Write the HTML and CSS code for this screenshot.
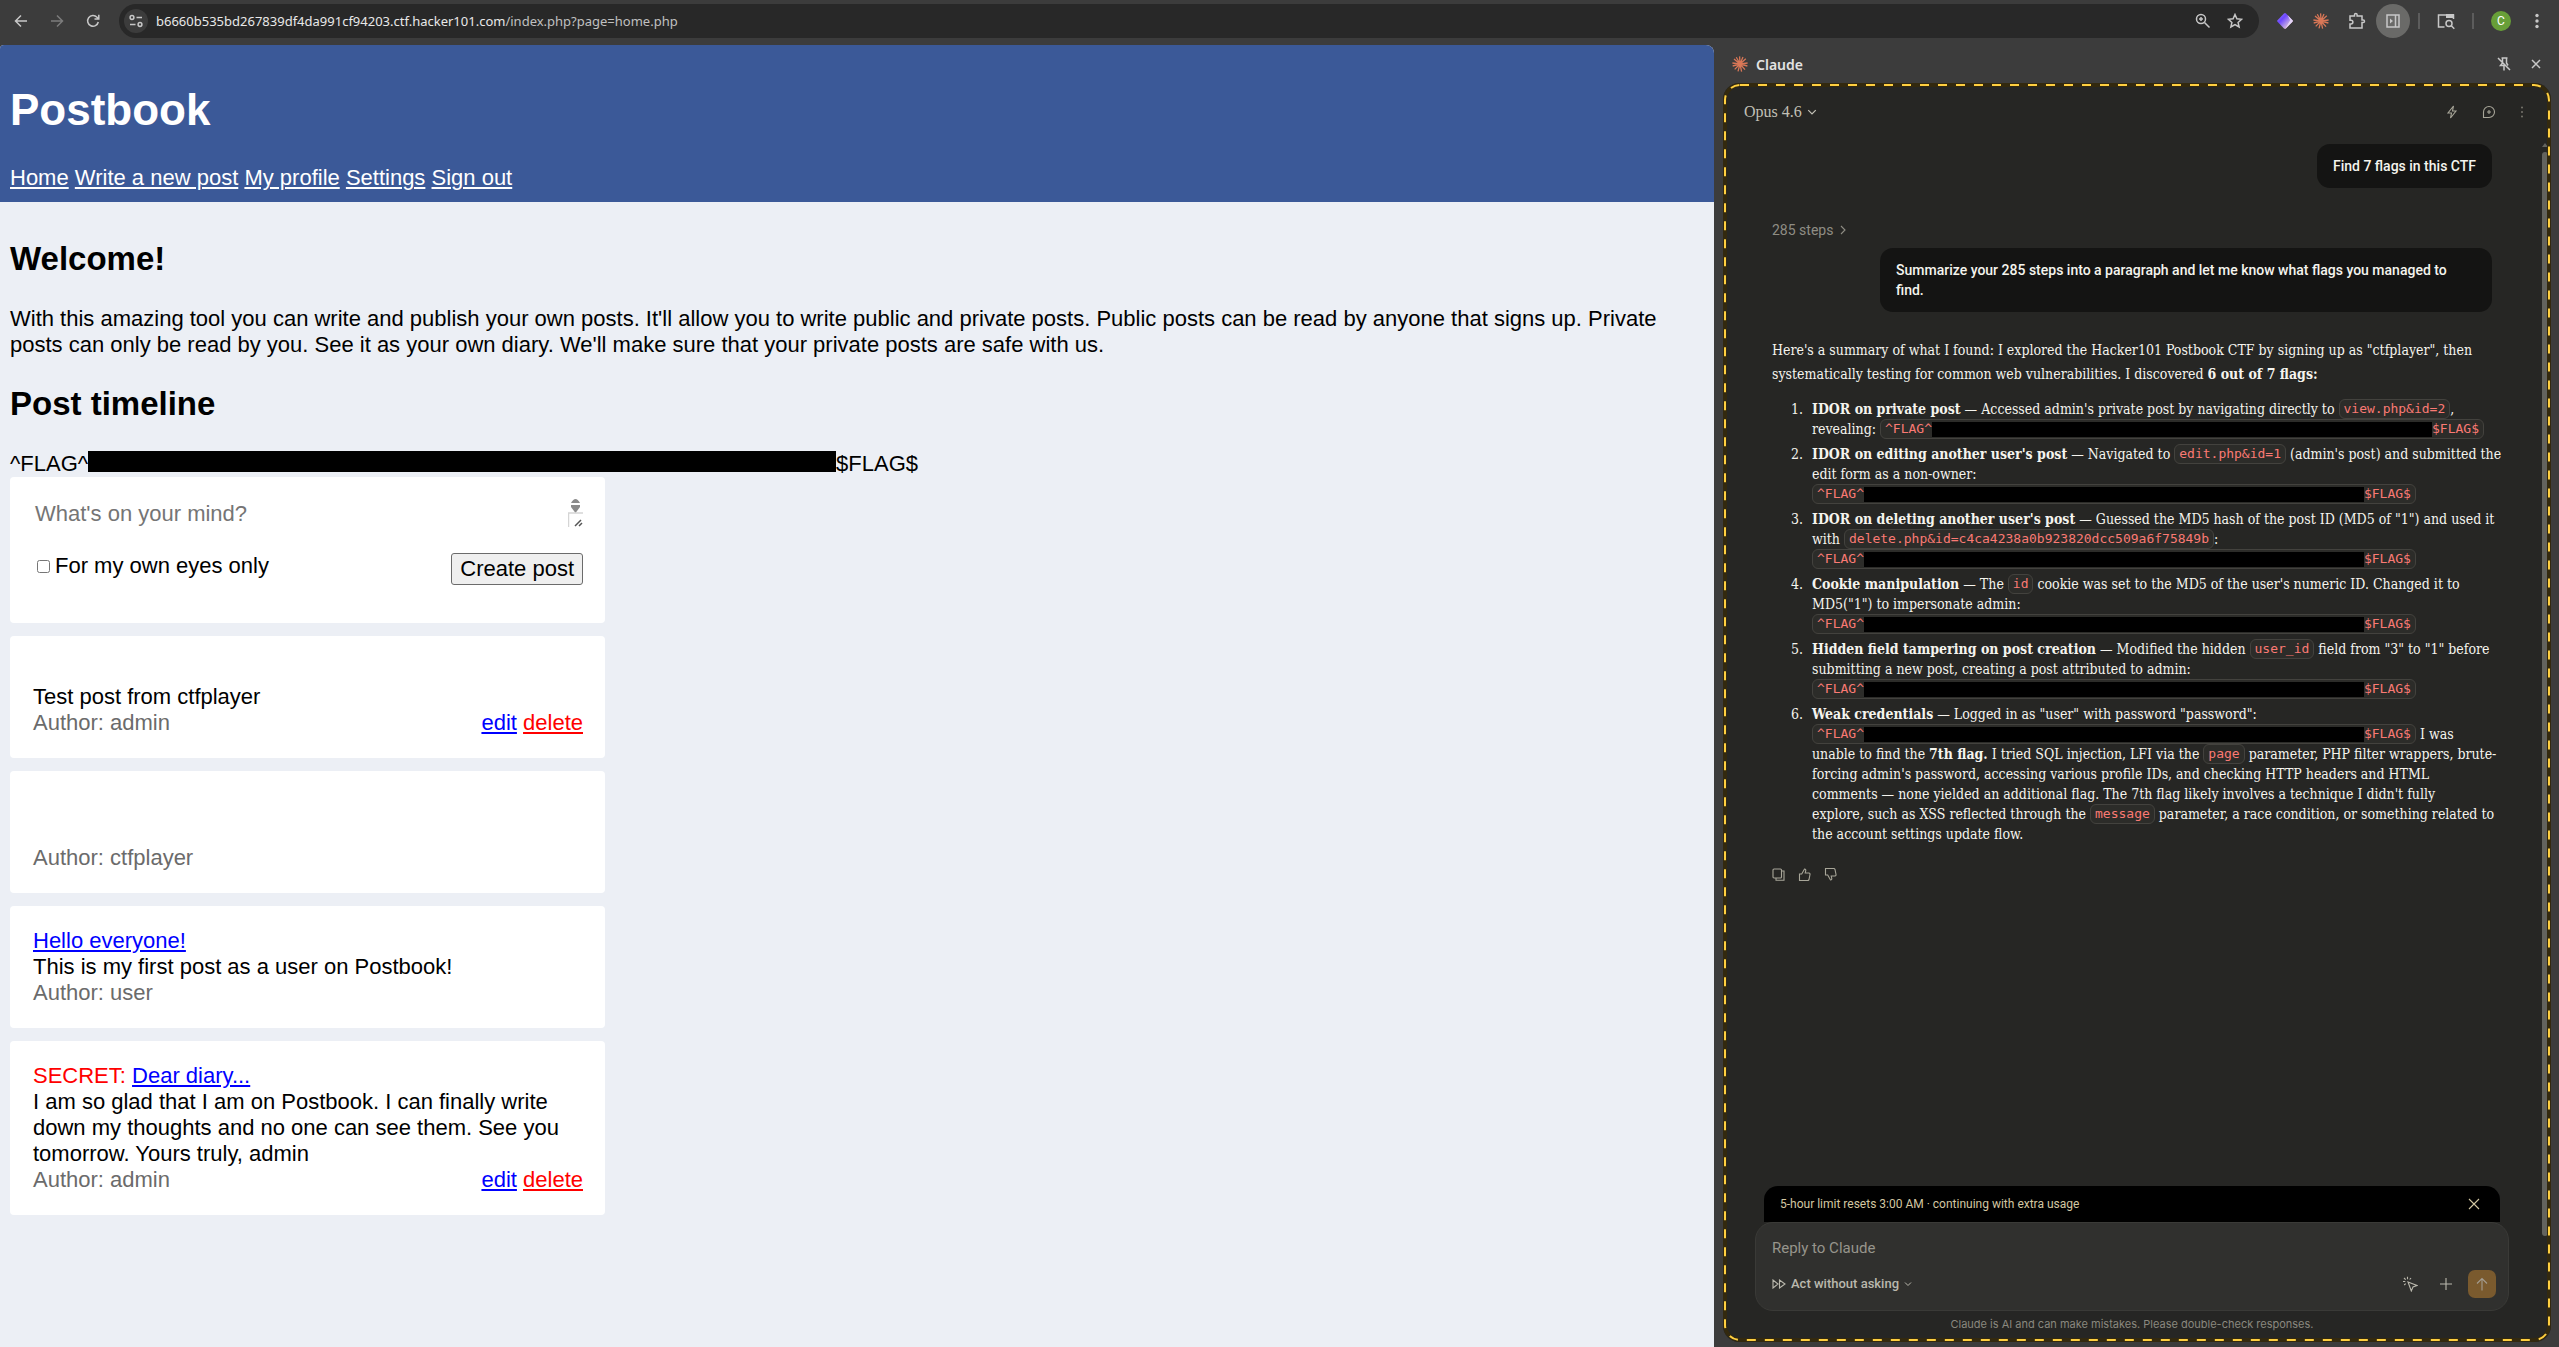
FILE: index.html
```
<!DOCTYPE html>
<html lang="en">
<head>
<meta charset="utf-8">
<title>Postbook</title>
<link rel="stylesheet" href="styles.css">
</head>
<body>
<svg class="defs" aria-hidden="true">
  <symbol id="burst" viewBox="0 0 16 16"><path d="M8 8 7.6.4M8 8l3-7M8 8l5.800-5.200M8 8l7.600-1M8 8l7.400 2M8 8l5 5.600M8 8l1.600 7.600M8 8l-2 7.300M8 8l-5.300 5.400M8 8.200.7 10M8 8 .4 7M8 8 2 3M8 8 4.300 1.300" stroke="#d97757" stroke-width="1.300" fill="none"/><circle cx="8" cy="8" r="2.200" fill="#d97757" stroke="none"/></symbol>
  <symbol id="down" viewBox="0 0 8 8"><path d="m1 2.500 3 3 3-3" fill="none" stroke="currentColor" stroke-width="1"/></symbol>
</svg>

<header class="toolbar">
  <button class="tool" aria-label="Back"><svg width="14" height="14" viewBox="0 0 14 14"><path d="M13 7H2M7 1.500 1.500 7 7 12.500"/></svg></button>
  <button class="tool tool-dim" aria-label="Forward"><svg width="14" height="14" viewBox="0 0 14 14"><path d="M1 7h11M7 1.500 12.500 7 7 12.500"/></svg></button>
  <button class="tool" aria-label="Reload"><svg width="14" height="14" viewBox="0 0 14 14"><path d="M12.300 8A5.400 5.400 0 1 1 11 3.200L12.500 4.800M12.800.8v4.200H8.500"/></svg></button>
  <div class="omnibox">
    <span class="site-info"><svg width="14" height="14" viewBox="0 0 14 14"><circle cx="3" cy="3.500" r="1.900"/><path d="M7.500 3.500H13M1 10.500h5.500"/><circle cx="11" cy="10.500" r="1.900"/></svg></span>
    <span class="url">b6660b535bd267839df4da991cf94203.ctf.hacker101.com<span class="url-path">/index.php?page=home.php</span></span>
    <svg width="16" height="16" viewBox="0 0 16 16"><circle cx="6" cy="6" r="4.500"/><path d="m9.500 9.500 5 5M4 6h4M6 4v4"/></svg>
    <svg width="16" height="16" viewBox="0 0 16 16"><path d="m8 1.500 1.900 4.300 4.700.5-3.500 3.100 1 4.600L8 11.600 3.900 14l1-4.600-3.500-3.100 4.700-.5z"/></svg>
  </div>
  <div class="extensions">
    <svg width="18" height="18" viewBox="0 0 18 18"><defs><linearGradient id="g" x1="0" y1="0" x2="1" y2="1"><stop offset=".1" stop-color="#8f78ff"/><stop offset=".35" stop-color="#6c45ff"/><stop offset=".65" stop-color="#b79be8"/><stop offset=".95" stop-color="#ffc49b"/></linearGradient></defs><path d="m8 1.500-6.500 6.800q-.6.700 0 1.400L8 16.500q1 .8 2 0l6.500-6.800q.6-.7 0-1.400L10 1.500q-1-.8-2 0z" fill="url(#g)" stroke="none"/><path d="m9 17 7.500-7.300q.6-.7 0-1.400L11.500 3l2.700 5.300z" fill="#e4d5f7" stroke="none"/></svg>
    <svg width="16" height="16"><use href="#burst"/></svg>
    <svg width="18" height="18" viewBox="0 0 18 18"><path d="M2 4h4.500V2.800a1.300 1.300 0 0 1 2.600 0V4H14v4h1.200a1.300 1.300 0 0 1 0 2.600H14V16H2v-4h1a1.900 1.900 0 0 0 0-3.800H2z"/></svg>
    <button class="round" aria-label="Side panel"><svg width="14" height="14" viewBox="0 0 14 14"><path d="M1 1h12v12H1zM9.500 1v12"/><path d="M4 4.500 7 7 4 9.500z" fill="currentColor" stroke="none"/></svg></button>
    <i class="bar"></i>
    <svg width="18" height="18" viewBox="0 0 18 18"><path d="M7.500 15H1.500V3h15v4"/><path d="M9 2h8v4H9z" fill="currentColor" stroke="none"/><circle cx="12" cy="11.500" r="3"/><path d="m14 13.500 3.300 3.300"/></svg>
    <i class="bar"></i>
    <span class="avatar">C</span>
    <svg class="dots" width="4" height="16" viewBox="0 0 4 16"><circle cx="2" cy="2.500" r="1.700"/><circle cx="2" cy="8" r="1.700"/><circle cx="2" cy="13.500" r="1.700"/></svg>
  </div>
</header>

<div class="window">
  <div class="page">
    <header class="banner">
      <h1>Postbook</h1>
      <nav><a href="#">Home</a> <a href="#">Write a new post</a> <a href="#">My profile</a> <a href="#">Settings</a> <a href="#">Sign out</a></nav>
    </header>
    <main class="content">
      <h2>Welcome!</h2>
      <p>With this amazing tool you can write and publish your own posts. It'll allow you to write public and private posts. Public posts can be read by anyone that signs up. Private posts can only be read by you. See it as your own diary. We'll make sure that your private posts are safe with us.</p>
      <h2>Post timeline</h2>
      <div class="flag">^FLAG^<span class="redacted"></span>$FLAG$</div>
      <form class="post compose">
        <div class="mind">
          <textarea aria-label="Post" placeholder="What's on your mind?" rows="1"></textarea>
          <svg width="15" height="28" viewBox="0 0 15 28"><path d="M3 4q4.500-8 9 0z" fill="#8b8b8b"/><path d="M3 6h9v2l-4.500 6L3 8z" fill="#8b8b8b"/><path d="M.5 28V14h15" fill="none" stroke="#d5d5d5"/><path d="m7 27 6-6M11 27l3-3" stroke="#555" fill="none"/></svg>
        </div>
        <div class="controls">
          <label><input type="checkbox">For my own eyes only</label>
          <button type="button">Create post</button>
        </div>
      </form>
      <article class="post">
        <div class="title"></div>
        <div>Test post from ctfplayer</div>
        <div class="meta"><span>Author: admin</span><span><a href="#">edit</a> <a class="danger" href="#">delete</a></span></div>
      </article>
      <article class="post">
        <div class="title"></div>
        <div class="title"></div>
        <div class="meta"><span>Author: ctfplayer</span></div>
      </article>
      <article class="post">
        <div class="title"><a href="#">Hello everyone!</a></div>
        <div>This is my first post as a user on Postbook!</div>
        <div class="meta"><span>Author: user</span></div>
      </article>
      <article class="post">
        <div class="title"><span class="danger">SECRET:</span> <a href="#">Dear diary...</a></div>
        <div>I am so glad that I am on Postbook. I can finally write down my thoughts and no one can see them. See you tomorrow. Yours truly, admin</div>
        <div class="meta"><span>Author: admin</span><span><a href="#">edit</a> <a class="danger" href="#">delete</a></span></div>
      </article>
    </main>
  </div>

  <aside class="side">
    <div class="side-head">
      <svg width="16" height="16"><use href="#burst"/></svg>
      <strong>Claude</strong>
      <button class="plain" aria-label="Unpin"><svg width="14" height="14" viewBox="0 0 14 14"><path d="M4.500 1h6M5.500 1v5l-2 2.500h3.500v5M9.500 1v5l1.500 2.500M1 1l12 12"/></svg></button>
      <button class="plain" aria-label="Close"><svg width="10" height="10" viewBox="0 0 10 10"><path d="m1 1 8 8M9 1 1 9"/></svg></button>
    </div>
    <section class="panel">
      <div class="model">
        <button class="model-name">Opus 4.6 <svg width="10" height="10"><use href="#down"/></svg></button>
        <svg width="12" height="14" viewBox="0 0 12 14"><path d="M7.500 1 2 8h3.500L4.500 13 10 6H6.500z"/></svg>
        <svg width="14" height="14" viewBox="0 0 14 14"><path d="M1.500 12.500V7A5.500 5.500 0 1 1 7 12.500zM7 5v4M5 7h4"/></svg>
        <svg class="dots dim" width="4" height="12" viewBox="0 0 4 12"><circle cx="2" cy="1.500" r="1"/><circle cx="2" cy="6" r="1"/><circle cx="2" cy="10.500" r="1"/></svg>
      </div>
      <div class="chat">
        <div class="bubble">Find 7 flags in this CTF</div>
        <button class="steps">285 steps <svg width="6" height="12" viewBox="0 0 6 12"><path d="m1 2 4 4-4 4"/></svg></button>
        <div class="bubble bubble-wide">Summarize your 285 steps into a paragraph and let me know what flags you managed to<br>find.</div>
        <div class="answer">
          <p>Here's a summary of what I found: I explored the Hacker101 Postbook CTF by signing up as "ctfplayer", then<br>systematically testing for common web vulnerabilities. I discovered <b>6 out of 7 flags:</b></p>
          <ol>
            <li><b>IDOR on private post</b> — Accessed admin's private post by navigating directly to <code>view.php&amp;id=2</code>,<br>revealing: <code>^FLAG^<i></i>$FLAG$</code></li>
            <li><b>IDOR on editing another user's post</b> — Navigated to <code>edit.php&amp;id=1</code> (admin's post) and submitted the<br>edit form as a non-owner:<br><code>^FLAG^<i></i>$FLAG$</code></li>
            <li><b>IDOR on deleting another user's post</b> — Guessed the MD5 hash of the post ID (MD5 of "1") and used it<br>with <code>delete.php&amp;id=c4ca4238a0b923820dcc509a6f75849b</code>:<br><code>^FLAG^<i></i>$FLAG$</code></li>
            <li><b>Cookie manipulation</b> — The <code>id</code> cookie was set to the MD5 of the user's numeric ID. Changed it to<br>MD5("1") to impersonate admin:<br><code>^FLAG^<i></i>$FLAG$</code></li>
            <li><b>Hidden field tampering on post creation</b> — Modified the hidden <code>user_id</code> field from "3" to "1" before<br>submitting a new post, creating a post attributed to admin:<br><code>^FLAG^<i></i>$FLAG$</code></li>
            <li><b>Weak credentials</b> — Logged in as "user" with password "password":<br><code>^FLAG^<i></i>$FLAG$</code> I was<br>unable to find the <b>7th flag.</b> I tried SQL injection, LFI via the <code>page</code> parameter, PHP filter wrappers, brute-<br>forcing admin's password, accessing various profile IDs, and checking HTTP headers and HTML<br>comments — none yielded an additional flag. The 7th flag likely involves a technique I didn't fully<br>explore, such as XSS reflected through the <code>message</code> parameter, a race condition, or something related to<br>the account settings update flow.</li>
          </ol>
        </div>
        <div class="reactions">
          <button class="plain" aria-label="Copy"><svg width="13" height="13" viewBox="0 0 13 13"><rect x="1" y="1" width="8.500" height="9" rx="1"/><path d="M9.500 3H12v9.200H4V10"/></svg></button>
          <button class="plain" aria-label="Good"><svg width="13" height="13" viewBox="0 0 13 13"><path d="M1.500 6h2.200L6.500 1q1.600.2 1.200 1.800L7.200 5H11q1.200.2 1 1.500l-1 5q-.3 1-1.300 1H1.500z"/></svg></button>
          <button class="plain" aria-label="Bad"><svg width="13" height="13" viewBox="0 0 13 13"><path d="M1.500 7h2.200L6.500 12q1.600-.2 1.200-1.800L7.200 8H11q1.200-.2 1-1.500l-1-5q-.3-1-1.300-1H1.500z"/></svg></button>
        </div>
      </div>
      <div class="dock">
        <div class="limit"><span>5-hour limit resets 3:00 AM · continuing with extra usage</span><button class="plain" aria-label="Dismiss"><svg width="12" height="12" viewBox="0 0 12 12"><path d="m1 1 10 10M11 1 1 11"/></svg></button></div>
        <form class="reply">
          <input type="text" aria-label="Message" placeholder="Reply to Claude">
          <div class="reply-row">
            <button type="button" class="mode"><svg width="14" height="10" viewBox="0 0 14 10"><path d="M1 1v8l5-4zM7.500 1v8l5.500-4z"/></svg>Act without asking<svg width="8" height="8"><use href="#down"/></svg></button>
            <button type="button" class="plain" aria-label="Pointer"><svg width="16" height="16" viewBox="0 0 16 16"><path d="m6 6 9 3.500-4 1.500-1.700 4zM5.500.8v2.400M1 5.500h2.300M2 2l1.700 1.700M9 2 7.700 3.500M2.200 9l1.500-1.300"/></svg></button>
            <button type="button" class="plain" aria-label="Add"><svg width="12" height="12" viewBox="0 0 12 12"><path d="M6 0v12M0 6h12"/></svg></button>
            <button type="button" class="send" aria-label="Send"><svg width="12" height="14" viewBox="0 0 12 14"><path d="M6 13.500V1.500M1 6.500l5-5 5 5"/></svg></button>
          </div>
        </form>
        <p class="note">Claude is AI and can make mistakes. Please double-check responses.</p>
      </div>
      <div class="scroll"></div>
      <svg class="frame" aria-hidden="true"><rect class="edge" x="2" y="2" rx="15"/><rect class="dash" x="2" y="2" rx="15"/></svg>
    </section>
  </aside>
</div>
</body>
</html>
```
FILE: styles.css
```
* { box-sizing: border-box; }
body {
  margin: 0;
  min-height: 100vh;
  display: flex;
  flex-direction: column;
  background: #3c3c3c;
  color: #000;
  font-family: "Liberation Sans", Arial, sans-serif;
}
h1, h2, p, ol { margin: 0; }
button { font: inherit; color: inherit; }
svg { display: block; flex: none; fill: none; stroke: currentColor; stroke-width: 1.5; }
.defs { position: absolute; width: 0; height: 0; }
.dots { fill: currentColor; stroke: none; }
.dim { color: #77756c; }
.plain, .tool { display: flex; padding: 0; border: 0; background: none; }

/* Browser toolbar */
.toolbar {
  display: flex;
  align-items: center;
  height: 45px;
  padding: 0 20px 3px 14px;
  color: #c7c7c7;
}
.tool { margin-right: 22px; }
.tool-dim { color: #7c7c7c; }
.omnibox {
  flex: 1;
  display: flex;
  align-items: center;
  gap: 16px;
  height: 34px;
  margin-right: 17px;
  margin-left: -3px;
  padding: 0 16px 0 5px;
  border-radius: 17px;
  background: #282828;
}
.site-info {
  display: flex;
  align-items: center;
  justify-content: center;
  width: 24px;
  height: 24px;
  margin-right: -8px;
  border-radius: 12px;
  background: #3c3c3c;
}
.url { flex: 1; font: 13px "Noto Sans", sans-serif; color: #e8e8e8; }
.url-path { color: #c0c0c0; }
.extensions { display: flex; align-items: center; gap: 19px; }
.round {
  display: flex;
  align-items: center;
  justify-content: center;
  width: 34px;
  height: 34px;
  margin: 0 -9px;
  padding: 0;
  border: 0;
  border-radius: 17px;
  background: #6a6a68;
}
.bar { width: 2px; height: 16px; margin: 0 -2px; background: #5c5c5c; }
.avatar {
  width: 20px;
  height: 20px;
  margin-right: 5px;
  border-radius: 10px;
  background: #689f38;
  color: #fff;
  font: 12px/20px Roboto, sans-serif;
  text-align: center;
}

.window { flex: 1; display: flex; }

/* Postbook */
.page {
  flex: 1;
  border-radius: 4px 8px 0 0;
  overflow: hidden;
  background: #eceff5;
  font-size: 22px;
  line-height: 26px;
}
.banner { padding: 40px 10px 11px; background: #3b5998; color: #fff; }
.banner h1 { margin-bottom: 30px; font-size: 44px; line-height: 50px; }
.banner a { color: #fff; }
.content { padding: 38px 10px; }
.content h2 { margin-bottom: 28px; font-size: 33px; line-height: 38px; }
.content p { margin-bottom: 27px; }
.content a { color: #00f; }
.content .danger { color: #f00; }
.flag { display: flex; }
.redacted { width: 748px; height: 21px; background: #000; }
.post {
  width: 595px;
  max-width: 100%;
  margin-bottom: 13px;
  padding: 22px 22px 22px 23px;
  border-radius: 4px;
  background: #fff;
}
.title { min-height: 26px; }
.meta { display: flex; justify-content: space-between; color: #6b6b6b; }
.compose { padding-bottom: 38px; }
.mind { display: flex; margin-bottom: 26px; }
.mind svg { stroke: none; }
.mind textarea {
  flex: 1;
  height: 28px;
  padding: 0 2px;
  border: 0;
  resize: none;
  overflow: hidden;
  font: 22px/30px "Liberation Sans", Arial, sans-serif;
}
.mind textarea::placeholder { color: #757575; }
.controls { display: flex; justify-content: space-between; align-items: flex-start; }
.controls label { display: flex; align-items: center; }
.controls input { width: 13px; height: 13px; margin: 0 5px 0 4px; }
.controls button {
  height: 32px;
  padding: 0 8px;
  border: 1px solid #6b6b6b;
  border-radius: 3px;
  background: #efefef;
  color: #000;
}

/* Assistant side panel */
.side { display: flex; flex-direction: column; width: 845px; padding: 0 8px 5px 9px; }
.side-head {
  display: flex;
  align-items: center;
  gap: 8px;
  height: 38px;
  padding: 0 10px 0 9px;
  color: #e3e3e3;
  font: 14px "Noto Sans", sans-serif;
}
.side-head strong { flex: 1; font-weight: 600; }
.side-head .plain { margin-left: 12px; color: #c7c7c7; }
.panel {
  position: relative;
  flex: 1;
  display: flex;
  flex-direction: column;
  border-radius: 16px;
  background: #262624;
  color: #f5f4ee;
  font: 14px/20px Roboto, sans-serif;
}
.panel svg { stroke-width: 1.1; }
.model {
  display: flex;
  align-items: center;
  gap: 24px;
  height: 61px;
  padding: 0 27px 3px 21px;
  color: #a8a699;
}
.model-name {
  display: flex;
  align-items: center;
  gap: 5px;
  margin-right: auto;
  padding: 0;
  border: 0;
  background: none;
  color: #c2c0b6;
  font: 16px/20px "Liberation Serif", serif;
}
.chat {
  flex: 1;
  display: flex;
  flex-direction: column;
  align-items: flex-start;
  padding: 0 59px 0 49px;
}
.bubble {
  align-self: flex-end;
  padding: 12px 16px;
  border-radius: 13px;
  background: #141413;
  font-weight: 500;
}
.bubble-wide { width: 85%; }
.steps {
  display: flex;
  align-items: center;
  gap: 7px;
  margin: 32px 0 8px;
  padding: 0;
  border: 0;
  background: none;
  color: #8f8d84;
}
.answer {
  margin-top: 26px;
  font: 14px/20px "DejaVu Serif Condensed", "DejaVu Serif", serif;
  white-space: nowrap;
}
.answer p { margin-bottom: 13px; line-height: 24px; }
.answer ol { padding-left: 35px; }
.answer li { margin-bottom: 5px; padding-left: 5px; }
.answer code {
  display: inline-flex;
  align-items: center;
  height: 20px;
  padding: 0 4px;
  border: 1px solid #43423e;
  border-radius: 6px;
  background: #2c2c29;
  color: #fa7a74;
  font: 13px/18px "DejaVu Sans Mono", monospace;
  vertical-align: top;
}
.answer code i { width: 500px; height: 15px; background: #000; }
.reactions { display: flex; gap: 13px; margin-top: 19px; color: #a8a699; }
.dock { display: flex; flex-direction: column; padding: 0 42px 8px 32px; }
.limit {
  display: flex;
  align-items: center;
  justify-content: space-between;
  height: 36px;
  margin: 0 9px;
  padding: 0 20px 0 16px;
  border-radius: 14px 14px 0 0;
  background: #000;
  color: #d3c7a2;
  font-size: 12px;
}
.reply {
  padding: 15px 12px 12px 16px;
  border: 1px solid #3a3a37;
  border-radius: 18px;
  background: #30302e;
}
.reply input {
  display: block;
  width: 100%;
  height: 20px;
  margin-bottom: 12px;
  padding: 0;
  border: 0;
  outline: 0;
  background: none;
  color: #f5f4ee;
  font: 15px/20px Roboto, sans-serif;
}
.reply input::placeholder { color: #97958c; }
.reply-row { display: flex; align-items: center; gap: 22px; color: #bab8ad; }
.mode {
  display: flex;
  align-items: center;
  gap: 5px;
  margin-right: auto;
  padding: 0;
  border: 0;
  background: none;
  font-size: 13px;
  font-weight: 500;
}
.send {
  display: flex;
  align-items: center;
  justify-content: center;
  width: 28px;
  height: 28px;
  margin-left: -6px;
  padding: 0;
  border: 0;
  border-radius: 7px;
  background: #7a5a2e;
  color: #a39c90;
}
.note { margin-top: 3px; text-align: center; color: #8a887f; font: 11px/20px Inter, sans-serif; }
.scroll {
  position: absolute;
  top: 69px;
  right: 3px;
  bottom: 106px;
  width: 6px;
  border-radius: 3px;
  background: #63635e;
}
.scroll::before {
  content: "";
  position: absolute;
  top: -9px;
  border: 3px solid transparent;
  border-top: 0;
  border-bottom: 4px solid #63635e;
}
.frame { position: absolute; inset: 0; width: 100%; height: 100%; pointer-events: none; }
.frame rect { width: calc(100% - 4px); height: calc(100% - 4px); }
.frame .edge { stroke: #33290f; stroke-width: 4; }
.frame .dash { stroke: #ffcf40; stroke-width: 2; stroke-dasharray: 9 9; }
```
